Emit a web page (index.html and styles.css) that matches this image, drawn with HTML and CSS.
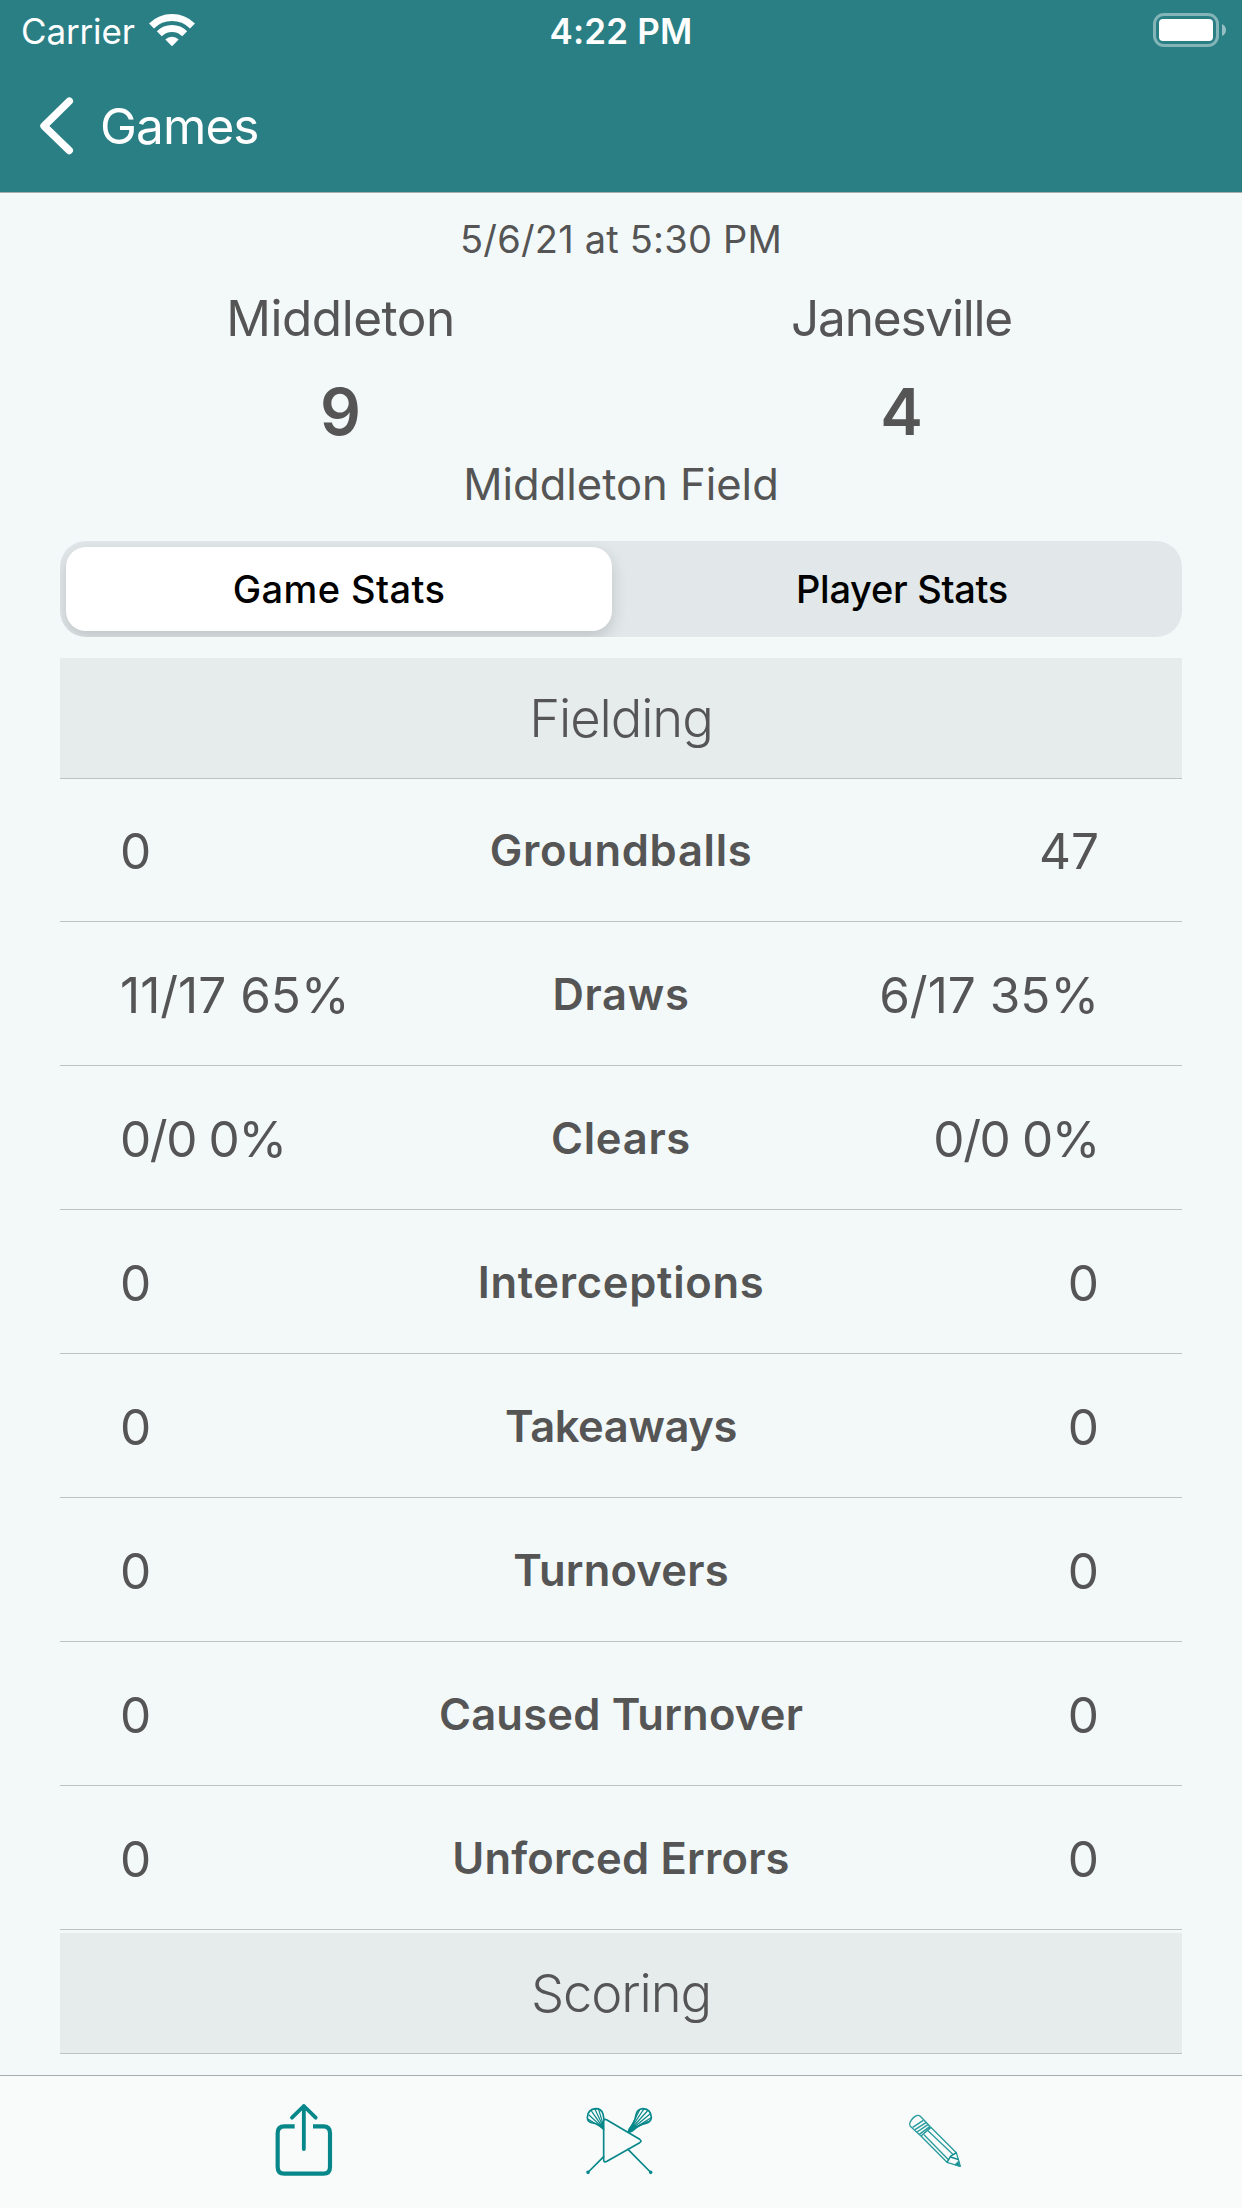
FILE: index.html
```html
<!DOCTYPE html>
<html lang="en">
<head>
<meta charset="utf-8">
<title>Game Stats</title>
<link rel="stylesheet" href="styles.css">
</head>
<body>
<div class="app">
  <header class="header">
    <div class="status">
      <div class="status-left">
        <span class="carrier">Carrier</span>
        <svg class="wifi" viewBox="0 0 48 36" fill="none" stroke="#fff" stroke-width="7">
          <path d="M3.5 14A29 29 0 0 1 44.5 14"/>
          <path d="M11.3 21.8A18 18 0 0 1 36.7 21.8"/>
          <path d="M24 34.3L17.3 27.6A9.5 9.5 0 0 1 30.7 27.6Z" fill="#fff" stroke="none"/>
        </svg>
      </div>
      <span class="clock">4:22 PM</span>
      <svg class="battery" viewBox="0 0 76 36">
        <rect x="1.500" y="1.500" width="63" height="31" rx="9.500" fill="none" stroke="#fff" stroke-opacity=".42" stroke-width="3"/>
        <rect x="6" y="6" width="54" height="22" rx="4" fill="#fff"/>
        <path d="M69 11Q73 13 73 17T69 23Z" fill="#fff" fill-opacity=".5"/>
      </svg>
    </div>
    <nav class="nav">
      <svg class="chevron" viewBox="0 0 36 60" fill="none" stroke="#fff" stroke-width="7.4" stroke-linecap="round" stroke-linejoin="round"><path d="M30.3 5.2L5 30L30.3 54.5"/></svg>
      <span class="back">Games</span>
    </nav>
  </header>
  <main class="main">
    <div class="date">5/6/21 at 5:30 PM</div>
    <div class="teams">
      <span class="team">Middleton</span><span class="team visitor">Janesville</span>
      <span class="score">9</span><span class="score">4</span>
    </div>
    <div class="field">Middleton Field</div>
    <div class="segments">
      <div class="segment active">Game Stats</div>
      <div class="segment">Player Stats</div>
    </div>
    <section class="group">
      <h2 class="title">Fielding</h2>
      <div class="row"><span class="value">0</span><span class="label wide">Groundballs</span><span class="value">47</span></div>
      <div class="row"><span class="value">11/17 65%</span><span class="label wide">Draws</span><span class="value">6/17 35%</span></div>
      <div class="row"><span class="value ratio">0/0 0%</span><span class="label wide">Clears</span><span class="value ratio">0/0 0%</span></div>
      <div class="row"><span class="value">0</span><span class="label wide">Interceptions</span><span class="value">0</span></div>
      <div class="row"><span class="value">0</span><span class="label tight">Takeaways</span><span class="value">0</span></div>
      <div class="row"><span class="value">0</span><span class="label">Turnovers</span><span class="value">0</span></div>
      <div class="row"><span class="value">0</span><span class="label">Caused Turnover</span><span class="value">0</span></div>
      <div class="row"><span class="value">0</span><span class="label">Unforced Errors</span><span class="value">0</span></div>
    </section>
    <section class="group">
      <h2 class="title">Scoring</h2>
    </section>
  </main>
  <footer class="toolbar">
    <svg class="tool" viewBox="-2 0 330 360" fill="none" stroke="#078789" stroke-width="12.5">
      <path d="M135 139H104Q84 139 84 159V261Q84 281 104 281H221Q241 281 241 261V159Q241 139 221 139H190"/>
      <path d="M162.500 207V78M127 113L162.500 78L198 113" stroke-linecap="round" stroke-linejoin="round" stroke-width="11.500"/>
    </svg>
    <svg class="tool" viewBox="11 0 330 360" fill="none" stroke="#078789" stroke-width="5" stroke-linecap="round" stroke-linejoin="round">
      <path d="M130 125Q130 115 140 120L238 178Q246 183 238 188L140 244Q130 249 130 239Z"/>
      <path d="M130 230L84 276M203 208L270 276"/>
      <circle cx="83" cy="277" r="3"/><circle cx="271" cy="277" r="3"/>
      <path d="M130 148L118 137Q110 130 97 129Q81 127 81 112Q82 88 107 86Q123 86 128 102L131 118"/>
      <path d="M130 146L94 94M130 146L86 105M130 146L84 118M130 143L104 88M130 138L115 89" stroke-width="3.500"/>
      <path d="M204 156L207 146Q224 126 226 108Q229 87 248 86Q272 88 273 112Q272 126 256 130Q241 132 228 142Q215 156 204 156"/>
      <path d="M204 156L238 90M204 156L250 88M204 156L261 93M204 156L269 102M204 156L271 114M204 156L264 124" stroke-width="3.500"/>
    </svg>
    <svg class="tool pencil" viewBox="0 0 330 300" fill="none" stroke="#2a9b9c" stroke-width="4" stroke-linejoin="round">
      <path d="M122 137L91 109Q87 103 90 97Q98 82 110 77Q116 75 121 79L151 110"/>
      <path d="M98 112L130 91M105 119L139 97M111 126L145 103M118 133L150 109M123 138L152 113" stroke-width="4.500"/>
      <path d="M122 137L201 217L241 229L229 188L151 110M132 134L207 211M144 122L220 194"/>
      <path d="M201 217L212 198L220 194L229 188M212 201L236 209M226 226L238 215" stroke="#078789"/>
      <path d="M240 229L226 224L235 215Z" fill="#078789"/>
    </svg>
  </footer>
</div>
</body>
</html>
```
FILE: styles.css
```css
*{box-sizing:border-box}
body{margin:0;background:#f3f9f9;color:#555;font-family:Inter,"Liberation Sans",sans-serif}
.app{height:2208px;display:flex;flex-direction:column;overflow:hidden}
.header{height:193px;background:#2a7f85;color:#fff;border-bottom:1px solid #a8acad}
.status{height:60px;padding:2px 13px 0 21px;display:grid;grid-template-columns:1fr auto 1fr;align-items:center;font-size:35px;line-height:58px}
.status-left{display:flex;align-items:center;gap:13px}
.carrier{letter-spacing:-.15px}
.wifi{width:48px;height:36px;margin-top:-2px}
.clock{font-weight:600;letter-spacing:.2px;margin:0 4px 0 -4px}
.battery{width:76px;height:36px;justify-self:end}
.nav{height:132px;display:flex;align-items:center;padding-left:39px;gap:25px;font-size:49.5px}
.chevron{width:36px;height:60px}
.back{letter-spacing:-.9px}
.main{flex:1;padding:0 60px;display:flex;flex-direction:column}
.date{line-height:92px;font-size:38px;letter-spacing:.2px;text-align:center}
.teams{display:grid;grid-template-columns:1fr 1fr;text-align:center}
.team{font-size:49.5px;line-height:66px;letter-spacing:-.5px}
.visitor{letter-spacing:-1.2px}
.score{font-size:64px;line-height:81px;font-weight:600;padding-top:20px}
.field{font-size:43.5px;line-height:64px;text-align:center}
.segments{height:96px;margin:25px 0 21px;padding:6px;display:grid;grid-template-columns:546px 1fr;border-radius:26px;background:#e2e8ea;overflow:hidden;color:#000;font-size:38px;font-weight:500;line-height:84px;text-align:center}
.segment{padding-left:16px;letter-spacing:-.3px}
.active{padding-left:0;letter-spacing:.4px;background:#fff;border-radius:20px;box-shadow:0 6px 16px rgba(0,0,0,.16)}
.title{margin:0;height:121px;line-height:120px;background:#e6ecec;border-bottom:1px solid #bbc3c3;font-size:52.5px;font-weight:300;letter-spacing:-1.1px;text-align:center}
.row{height:144px;display:grid;grid-template-columns:1fr auto 1fr;align-items:center;border-bottom:1px solid #bbc3c3;padding:0 60px}
.title + .row{height:143px}
.value{font-size:49.5px;padding-top:2px}
.value:last-child{text-align:right;padding-right:23px}
.ratio{letter-spacing:-1.4px}
.label{font-size:43.5px;font-weight:600;letter-spacing:.2px}
.wide{letter-spacing:.7px}
.tight{letter-spacing:-.4px}
.group + .group{margin-top:3px}
.toolbar{height:133px;border-top:1px solid #a6adae;background:#f9fbfb;padding:4px 0 0 146px;display:grid;grid-template-columns:repeat(3,315.5px);justify-items:center}
.tool{width:110px;height:120px}
.pencil{height:100px;margin-top:10px}
```
